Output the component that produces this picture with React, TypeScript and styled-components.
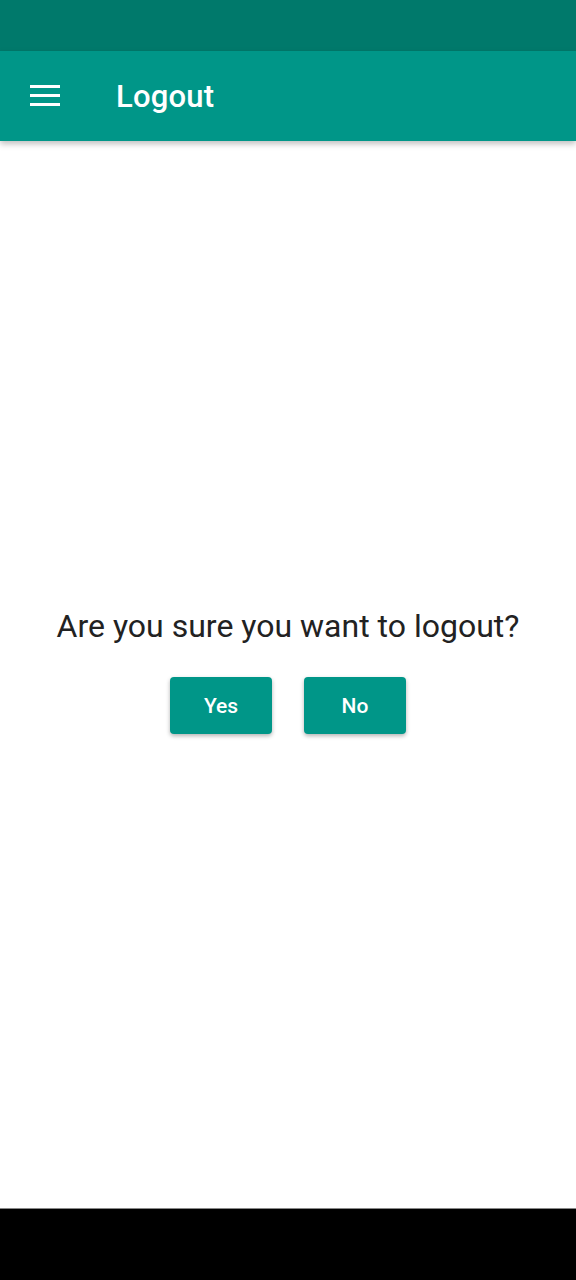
import React from "react";
import styled, { createGlobalStyle } from "styled-components";

const Global = createGlobalStyle`
  html, body { margin: 0; padding: 0; }
  body { font-family: Roboto, "Noto Sans", sans-serif; background: #fff; }
  #root { height: 1280px; }
`;

const Screen = styled.div`
  width: 576px;
  height: 1280px;
  display: flex;
  flex-direction: column;
  background: #fff;
  overflow: hidden;
`;

const StatusBar = styled.div`
  height: 51px;
  background: #00796b;
  flex: none;
`;

const AppBar = styled.header`
  height: 90px;
  background: #009688;
  display: flex;
  align-items: center;
  box-shadow: 0 3px 6px rgba(0, 0, 0, 0.25);
  position: relative;
  z-index: 1;
  flex: none;
`;

const MenuButton = styled.div`
  width: 30px;
  height: 30px;
  margin-left: 30px;
  display: flex;
  align-items: center;
  justify-content: center;
`;

const Title = styled.h1`
  margin: 0 0 0 56px;
  color: #fff;
  font-family: Roboto, sans-serif;
  font-weight: 500;
  font-size: 31px;
  letter-spacing: 0.2px;
`;

const Content = styled.main`
  flex: 1;
  display: flex;
  flex-direction: column;
  align-items: center;
  justify-content: center;
  gap: 32px;
  padding-bottom: 8px;
`;

const Question = styled.p`
  margin: 0;
  font-family: Roboto, sans-serif;
  font-size: 32px;
  color: #222;
  line-height: 38px;
`;

const Buttons = styled.div`
  display: flex;
  gap: 32px;
`;

const Button = styled.button`
  width: 102px;
  height: 57px;
  border: none;
  border-radius: 4px;
  background: #009688;
  color: #fff;
  font-family: Roboto, sans-serif;
  font-weight: 500;
  font-size: 21px;
  box-shadow: 0 2px 4px rgba(0, 0, 0, 0.3);
  cursor: pointer;
`;

const NavBar = styled.div`
  height: 71px;
  background: #000;
  border-top: 1px solid #888;
  flex: none;
`;

export default function App() {
  return (
    <Screen>
      <Global />
      <StatusBar />
      <AppBar>
        <MenuButton>
          <svg width="30" height="22" viewBox="0 0 30 22">
            <rect x="0" y="0" width="30" height="3" fill="#fff" />
            <rect x="0" y="9" width="30" height="3" fill="#fff" />
            <rect x="0" y="18" width="30" height="3" fill="#fff" />
          </svg>
        </MenuButton>
        <Title>Logout</Title>
      </AppBar>
      <Content>
        <Question>Are you sure you want to logout?</Question>
        <Buttons>
          <Button>Yes</Button>
          <Button>No</Button>
        </Buttons>
      </Content>
      <NavBar />
    </Screen>
  );
}
